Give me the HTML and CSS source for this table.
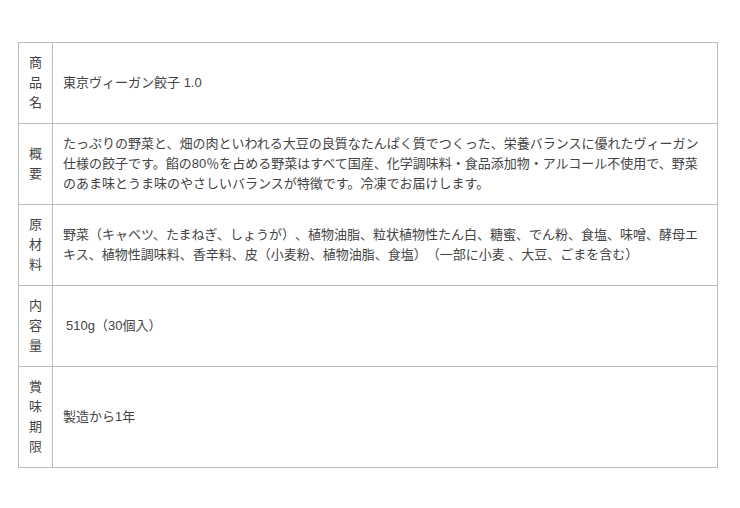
FILE: index.html
```html
<!DOCTYPE html>
<html lang="ja">
<head>
    <meta charset="UTF-8">
    <meta name="viewport" content="width=device-width, initial-scale=1.0">
    <title>商品情報</title>
    <link rel="stylesheet" href="styles.css">
</head>
<body>
    <div class="wrap">
        <table class="spec">
            <tr>
                <th>商品名</th>
                <td>東京ヴィーガン餃子 1.0</td>
            </tr>
            <tr>
                <th>概要</th>
                <td>たっぷりの野菜と、畑の肉といわれる大豆の良質なたんぱく質でつくった、栄養バランスに優れたヴィーガン仕様の餃子です。餡の80％を占める野菜はすべて国産、化学調味料・食品添加物・アルコール不使用で、野菜のあま味とうま味のやさしいバランスが特徴です。冷凍でお届けします。</td>
            </tr>
            <tr>
                <th>原材料</th>
                <td>野菜（キャベツ、たまねぎ、しょうが）、植物油脂、粒状植物性たん白、糖蜜、でん粉、食塩、味噌、酵母エキス、植物性調味料、香辛料、皮（小麦粉、植物油脂、食塩）（一部に小麦 、大豆、ごまを含む）</td>
            </tr>
            <tr>
                <th>内容量</th>
                <td><span class="lead"></span>510g（30個入）</td>
            </tr>
            <tr class="tall">
                <th>賞味期限</th>
                <td>製造から1年</td>
            </tr>
        </table>
    </div>
</body>
</html>
```

FILE: styles.css
```css
body {
    margin: 0;
    background: #fff;
    font-family: "Liberation Sans", "Noto Sans CJK JP", sans-serif;
    color: #444;
}
.wrap {
    padding: 42px 22px 0 18px;
}
.spec {
    width: 700px;
    border-collapse: collapse;
    font-size: 13px;
    line-height: 20px;
    text-spacing-trim: space-all;
}
.spec tr {
    height: 81px;
}
.spec tr.tall {
    height: 101px;
}
.spec th,
.spec td {
    border: 1px solid #bdbdbd;
    padding: 9px 10px;
    vertical-align: middle;
    text-align: left;
}
.spec th {
    width: 13px;
    font-weight: normal;
    text-align: center;
    word-break: break-all;
}
.lead {
    display: inline-block;
    width: 3px;
}
```
